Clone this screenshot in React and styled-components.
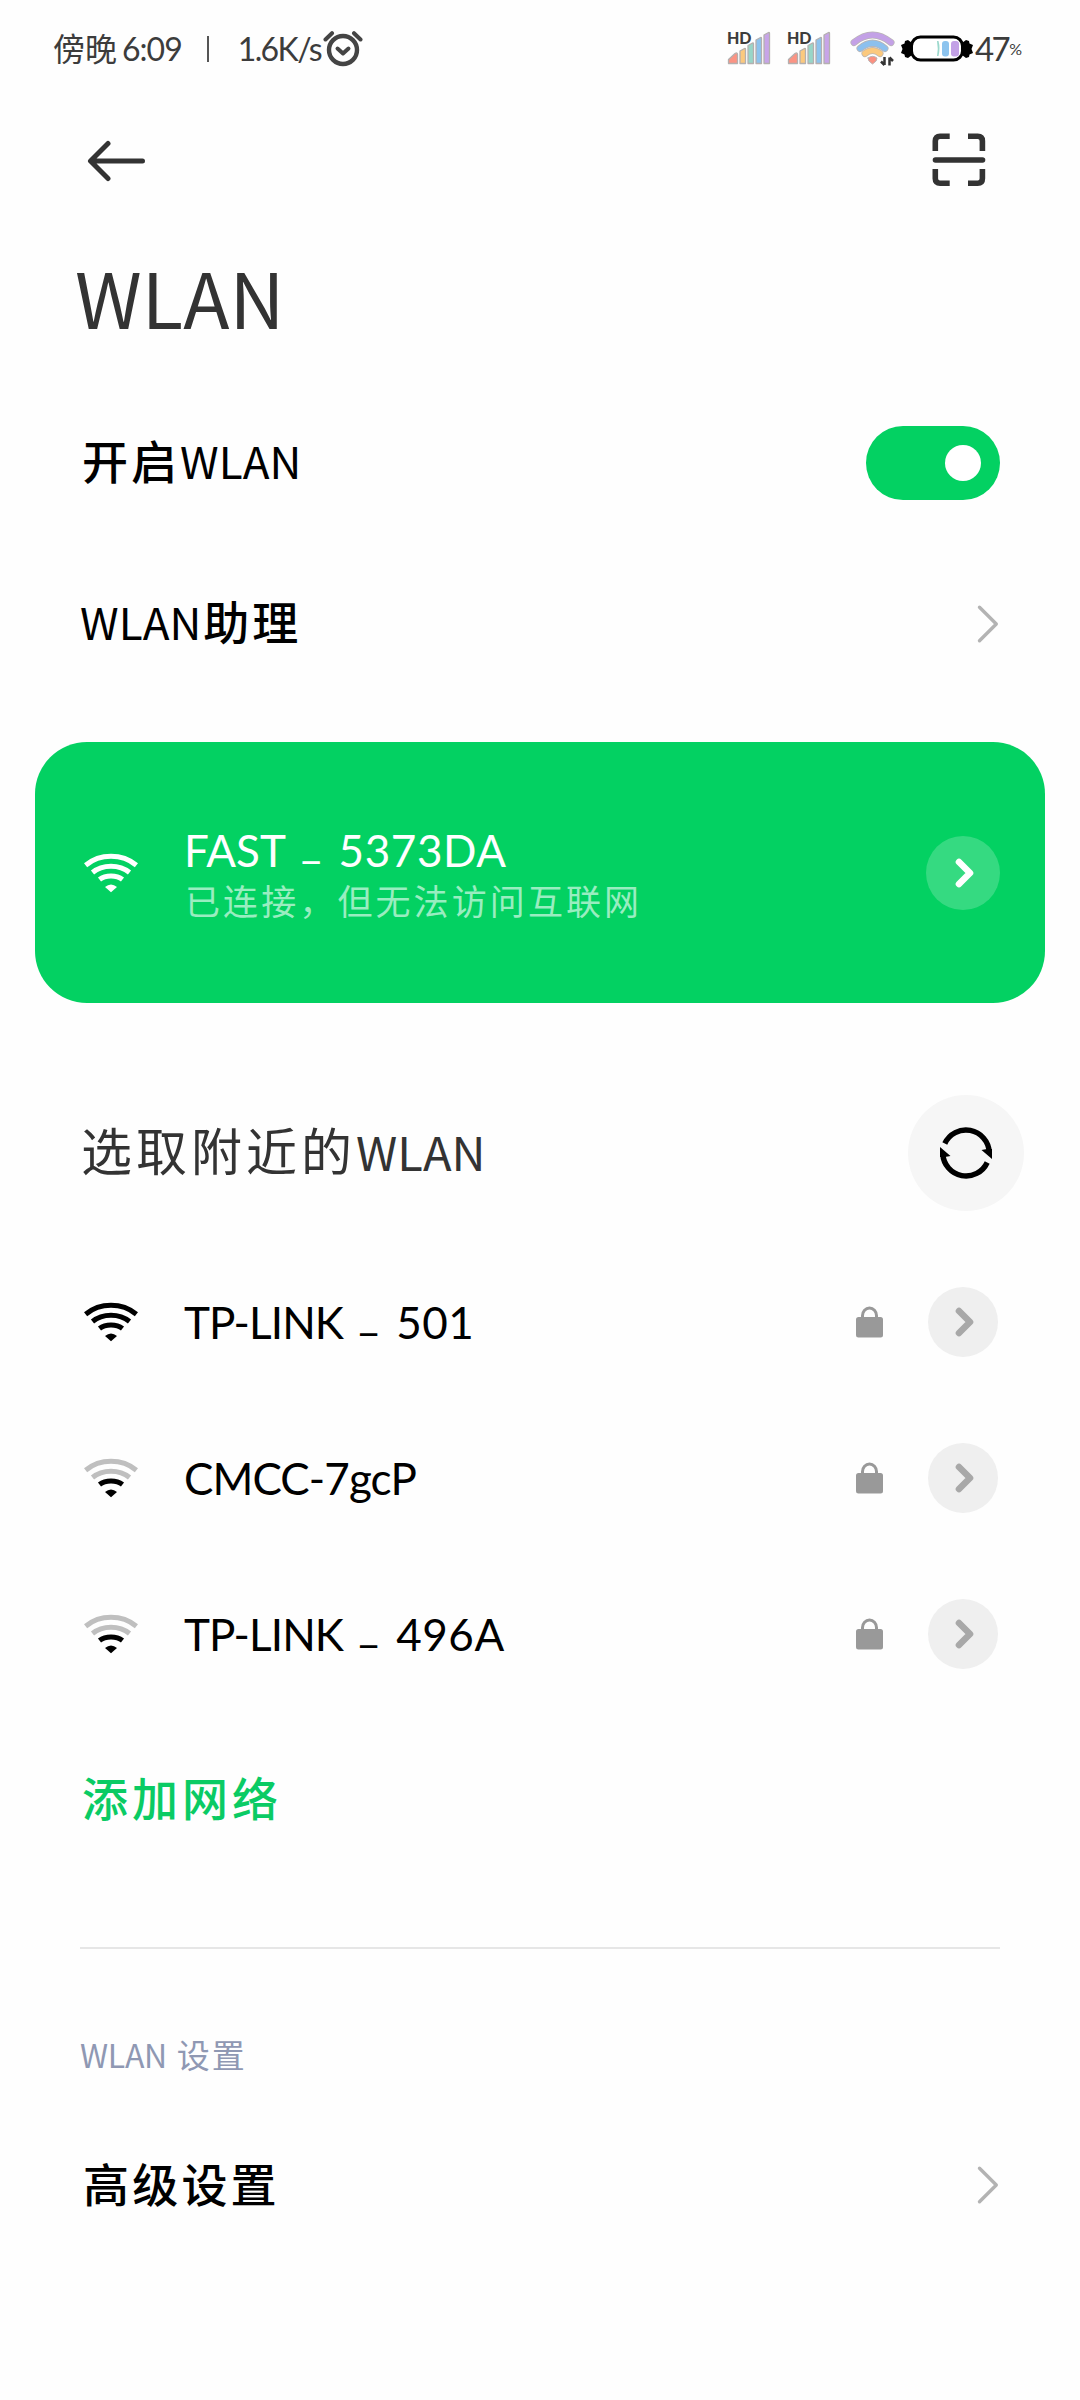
import React from 'react';
import styled, { createGlobalStyle } from 'styled-components';

const GlobalStyle = createGlobalStyle`
    * {
        box-sizing: border-box;
    }
    body {
        margin: 0;
        background: #fefefe;
        font-family: Lato, "Noto Sans CJK SC", sans-serif;
        color: #000;
    }
    svg {
        display: block;
        flex: none;
    }
`;

const Page = styled.div`
    display: flex;
    flex-direction: column;
    width: 1080px;
    height: 2400px;
    overflow: hidden;
`;

// text run, spacing differs between scripts
const Text = styled.span`
    font-size: ${p => p.$size || 46}px;
    letter-spacing: ${p => p.$gap || 0}px;
    word-spacing: ${p => p.$word || 0}px;
    margin-left: ${p => p.$left || 0}px;
    line-height: 1.2;
    white-space: pre;
`;

// narrower capitals for the WLAN word
const Wlan = styled(Text)`
    font-family: "Noto Sans CJK SC", sans-serif;
    font-weight: 400;
`;

const Line = styled.span`
    margin-bottom: 2px;
`;

const StatusBar = styled.div`
    display: flex;
    align-items: center;
    justify-content: space-between;
    height: 98px;
    padding: 0 58px 0 53px;
    color: #3c3c3c;
`;

const StatusGroup = styled.div`
    display: flex;
    align-items: center;
`;

const StatusSplit = styled.i`
    width: 2px;
    height: 26px;
    margin: 0 29px 0 25px;
    background: #555;
`;

const Signal = styled.div`
    position: relative;
    width: 60px;
    height: 36px;
`;

const Hd = styled.span`
    position: absolute;
    left: 0;
    top: -3px;
    font-size: 16px;
    font-weight: 900;
    line-height: 20px;
`;

const StatusIcon = styled.div`
    margin: 0 5px 0 3px;
`;

const Toolbar = styled.div`
    display: flex;
    align-items: center;
    justify-content: space-between;
    height: 125px;
    padding: 0 94px 0 87px;
    color: #333;
`;

const Title = styled.h1`
    display: flex;
    align-items: center;
    height: 154px;
    margin: 0;
    padding: 0 0 6px 75px;
    font-weight: 400;
    color: #333;
`;

const Row = styled.div`
    display: flex;
    align-items: center;
    justify-content: space-between;
    height: ${p => p.$height}px;
    padding: 0 80px;
    font-weight: 500;
`;

const Switch = styled.div`
    display: flex;
    align-items: center;
    justify-content: flex-end;
    width: 134px;
    height: 74px;
    padding-right: 19px;
    border-radius: 37px;
    background: #03d162;
`;

const Knob = styled.div`
    width: 36px;
    height: 36px;
    border-radius: 50%;
    background: #fff;
`;

const Connected = styled.div`
    display: flex;
    align-items: center;
    height: 261px;
    margin: 44px 35px 0;
    padding: 0 45px 0 49px;
    border-radius: 52px;
    background: #03d162;
    color: #fff;
`;

const Lines = styled.div`
    display: flex;
    flex: 1;
    flex-direction: column;
    gap: 4px;
    padding: 10px 0 0 46px;
`;

const Sub = styled.div`
    height: 52px;
    line-height: 52px;
    padding-left: 1px;
    color: #99edc0;
`;

const Name = styled.div`
    height: 52px;
    line-height: 52px;
`;

const Underscore = styled.span`
    margin: 0 5px;
    line-height: 0;
    vertical-align: 9px;
`;

const Round = styled.div`
    display: flex;
    align-items: center;
    justify-content: center;
    width: ${p => p.$size}px;
    height: ${p => p.$size}px;
    border-radius: 50%;
    background: ${p => p.$bg};
`;

const Section = styled.div`
    display: flex;
    align-items: center;
    justify-content: space-between;
    height: 182px;
    margin-top: 59px;
    padding: 0 56px 0 81px;
    color: #333;
`;

const Network = styled.div`
    display: flex;
    align-items: center;
    height: 156px;
    padding: 0 82px 0 84px;
`;

const Ssid = styled.div`
    flex: 1;
    height: 52px;
    padding-left: 46px;
    line-height: 52px;
`;

const Lock = styled.div`
    margin-right: 45px;
`;

const AddNetwork = styled.div`
    display: flex;
    align-items: center;
    height: 174px;
    padding-left: 82px;
    font-weight: 500;
    color: #0acb64;
`;

const Divider = styled.div`
    height: 2px;
    margin: 61px 80px 58px;
    background: #e6e6e6;
`;

const Label = styled.div`
    display: flex;
    align-items: center;
    height: 99px;
    padding-left: 80px;
    color: #8f98b3;
`;

const AlarmIcon = () => (
    <svg width="42" height="38" viewBox="-2 0 42 38" fill="none" stroke="#444" strokeLinecap="round" strokeLinejoin="round">
        <circle cx="20" cy="20" r="14" strokeWidth="4.4" />
        <path d="M14.5 18.5l5.5 5 5.5-5" strokeWidth="4" />
        <path d="M2.5 9.5L9 3.2M37.5 9.5L31 3.2" strokeWidth="4" />
    </svg>
);

const BARS = [
    ['M1.5 28.5L8 22.500q2.500-1.500 2.500 1V32.500H1.500z', '#fb9484'],
    ['M13 20l4.500-2.500q1-.5 1 1V32.500H13z', '#fbc97e'],
    ['M21 14.500l4.500-2.500q1-.5 1 1V32.500H21z', '#98d6c8'],
    ['M29 9l4.500-2.500q1-.5 1 1V32.500H29z', '#8cc3ee'],
    ['M37 4l4.500-2.500q1-.5 1 1V32.500H37z', '#c7a4e8'],
];

const SignalIcon = () => (
    <Signal>
        <svg width="44" height="34" viewBox="0 0 44 34" stroke="#b4b0b0" strokeWidth="1.3" strokeLinejoin="round">
            {BARS.map(([d, fill]) => <path key={fill} d={d} fill={fill} />)}
        </svg>
        <Hd>HD</Hd>
    </Signal>
);

const StatusWifi = () => (
    <svg width="46" height="36" viewBox="0 0 46 36" fill="none" strokeLinecap="round">
        <g stroke="#bab6b6">
            <path d="M4 11.500Q22.500-3.500 41 11.500" strokeWidth="7" />
            <path d="M10 17.500Q22.500 7 35 17.500" strokeWidth="7" />
            <path d="M15 22.500Q22.500 16.500 30 22.500" strokeWidth="7" />
        </g>
        <path d="M4 11.500Q22.500-3.500 41 11.500" stroke="#c3a1e6" strokeWidth="5.5" />
        <path d="M10 17.500Q22.500 7 35 17.500" stroke="#8cc0ee" strokeWidth="5.5" />
        <path d="M15 22.500Q22.500 16.500 30 22.500" stroke="#fbc97e" strokeWidth="5.5" />
        <path d="M18 27q4.500-3.500 9 0 .5 3-4.500 6-5-3-4.500-6z" fill="#fb9080" stroke="#bab6b6" />
        <path d="M34.500 26v8M34.500 34l-3.500-3.500M39.500 34.500v-8M39.500 26.500l3.500 3.500" stroke="#333" strokeWidth="2.5" strokeLinecap="butt" />
    </svg>
);

const BatteryIcon = () => (
    <svg width="72" height="30" viewBox="0 0 72 30">
        <path d="M11 9L7 6 4 7 3.500 9.500 0 11l1.500 4L0 19l3.500 1.500L4 23l3 1 4-3z" />
        <path d="M61 9l4-3 3 1 .5 2.500L72 11l-1.500 4 1.500 4-3.500 1.500L68 23l-3 1-4-3z" />
        <rect x="10.5" y="3" width="51" height="23" rx="9" fill="#fff" stroke="#000" strokeWidth="3" />
        <path d="M36 7h1.500q2 7 0 15H36q1.500-7 0-15z" fill="#9ad8cc" />
        <rect x="41" y="7" width="7" height="15.5" rx="3" fill="#8cc3ee" />
        <rect x="50" y="7" width="8" height="15.5" rx="3" fill="#c3a1e6" />
    </svg>
);

const BackIcon = () => (
    <svg width="60" height="42" viewBox="0 0 60 42" fill="none" stroke="currentColor" strokeWidth="5" strokeLinecap="round" strokeLinejoin="round">
        <path d="M55.500 21H4M21 3.500L3.500 21 21 38.500" />
    </svg>
);

const ScanIcon = () => (
    <svg width="54" height="56" viewBox="0 0 54 56" fill="none" stroke="currentColor" strokeWidth="5.6">
        <path d="M17.700 3.300H8Q3.300 3.300 3.300 8v10M36 3.300h9.700q4.700 0 4.700 4.700v10M17.700 50.200H8q-4.700 0-4.700-4.700v-9.500M36 50.200h9.700q4.700 0 4.700-4.700v-9.500" />
        <path d="M3.500 27h47" strokeLinecap="round" />
    </svg>
);

const Arrow = () => (
    <svg width="24" height="42" viewBox="0 0 24 42" fill="none" stroke="#b3b3b3" strokeWidth="3.4" strokeLinecap="round" strokeLinejoin="round">
        <path d="M3.500 4.200L20.300 21 3.500 37.800" />
    </svg>
);

const Chevron = ({ color }) => (
    <svg width="24" height="34" viewBox="0 0 24 34" fill="none" stroke={color} strokeWidth="6.6" strokeLinecap="round" strokeLinejoin="round">
        <path d="M8 6l11 11L8 28" />
    </svg>
);

// level: how many arcs, from the dot outward, are lit
const WifiIcon = ({ level = 4, color = '#000' }) => {
    const tone = n => (level >= n ? color : '#bfbfbf');
    return (
        <svg width="54" height="40" viewBox="0 0 54 40" fill="none" strokeWidth="5">
            <path d="M1.600 12.200Q12.500 3.300 27 3.300T52.400 12.200" stroke={tone(4)} />
            <path d="M8.500 19.500Q16 13.200 27 13.200T45.500 19.500" stroke={tone(3)} />
            <path d="M15.500 26.500Q20 23 27 23T38.500 26.500" stroke={tone(2)} />
            <path d="M21 34q6-5 12 0l-6 5.200z" fill={tone(1)} />
        </svg>
    );
};

const LockIcon = () => (
    <svg width="27" height="32" viewBox="0 0 27 32" fill="#999">
        <rect y="11" width="27" height="20.5" rx="2.5" />
        <path d="M6.500 12V9.500a7 7.500 0 0 1 14 0V12" fill="none" stroke="#999" strokeWidth="3" />
    </svg>
);

const RefreshIcon = () => (
    <svg width="56" height="56" viewBox="-28 -28 56 56" fill="none" stroke="#000" strokeWidth="5.4">
        <path d="M-21.200-9.500A23.300 23.300 0 0 1 23.200-1" />
        <path d="M21.200 9.500A23.300 23.300 0 0 1-23.200 1" />
        <path d="M26-4v10L15.500-3l5.500-1zM-26 4v-10L-15.500 3l-5.500 1z" fill="#000" stroke="none" />
    </svg>
);

const NetworkName = ({ name, gap }) => {
    const [head, tail] = name.split('_');
    return (
        <>
            <Text $size={44} $gap={gap}>{head}</Text>
            {tail && <Text $size={44} $gap={0.6}><Underscore>_</Underscore>{tail}</Text>}
        </>
    );
};

const NETWORKS = [
    { name: 'TP-LINK _ 501', level: 4 },
    { name: 'CMCC-7gcP', level: 2 },
    { name: 'TP-LINK _ 496A', level: 2 },
];

const App = () => (
    <Page>
        <GlobalStyle />
        <StatusBar>
            <StatusGroup>
                <Text $size={32}>傍晚</Text>
                <Text $size={32} $left={5} $gap={-1}>6:09</Text>
                <StatusSplit />
                <Text $size={32} $gap={-1.6}>1.6K/s</Text>
                <AlarmIcon />
            </StatusGroup>
            <StatusGroup>
                <SignalIcon />
                <SignalIcon />
                <StatusIcon><StatusWifi /></StatusIcon>
                <BatteryIcon />
                <Text $size={33} $gap={-2.5} $left={2}>47</Text>
                <Text $size={16} $left={1}>%</Text>
            </StatusGroup>
        </StatusBar>
        <Toolbar>
            <BackIcon />
            <ScanIcon />
        </Toolbar>
        <Title><Wlan $size={76}>WLAN</Wlan></Title>
        <Row $height={172}>
            <Line><Text $gap={3} $left={2}>开启</Text><Wlan $size={44}>WLAN</Wlan></Line>
            <Switch><Knob /></Switch>
        </Row>
        <Row $height={149}>
            <Line><Wlan $size={44}>WLAN</Wlan><Text $gap={3} $left={2}>助理</Text></Line>
            <Arrow />
        </Row>
        <Connected>
            <WifiIcon color="#fff" />
            <Lines>
                <Name><NetworkName name="FAST _ 5373DA" gap={0} /></Name>
                <Sub><Text $size={35} $gap={3.1}>已连接，但无法访问互联网</Text></Sub>
            </Lines>
            <Round $size={74} $bg="rgba(255, 255, 255, 0.2)"><Chevron color="#fff" /></Round>
        </Connected>
        <Section>
            <Line><Text $size={51} $gap={4}>选取附近的</Text><Wlan $size={47}>WLAN</Wlan></Line>
            <Round $size={116} $bg="#f6f6f6"><RefreshIcon /></Round>
        </Section>
        {NETWORKS.map(net => (
            <Network key={net.name}>
                <WifiIcon level={net.level} />
                <Ssid><NetworkName name={net.name} gap={-0.9} /></Ssid>
                <Lock><LockIcon /></Lock>
                <Round $size={70} $bg="#efefef"><Chevron color="#a8a8a8" /></Round>
            </Network>
        ))}
        <AddNetwork><Text $gap={4}>添加网络</Text></AddNetwork>
        <Divider />
        <Label><Line><Wlan $size={32} $gap={-0.3} $word={3}>WLAN </Wlan><Text $size={33} $gap={2}>设置</Text></Line></Label>
        <Row $height={157}>
            <Text $gap={3.2} $left={3}>高级设置</Text>
            <Arrow />
        </Row>
    </Page>
);

export default App;
